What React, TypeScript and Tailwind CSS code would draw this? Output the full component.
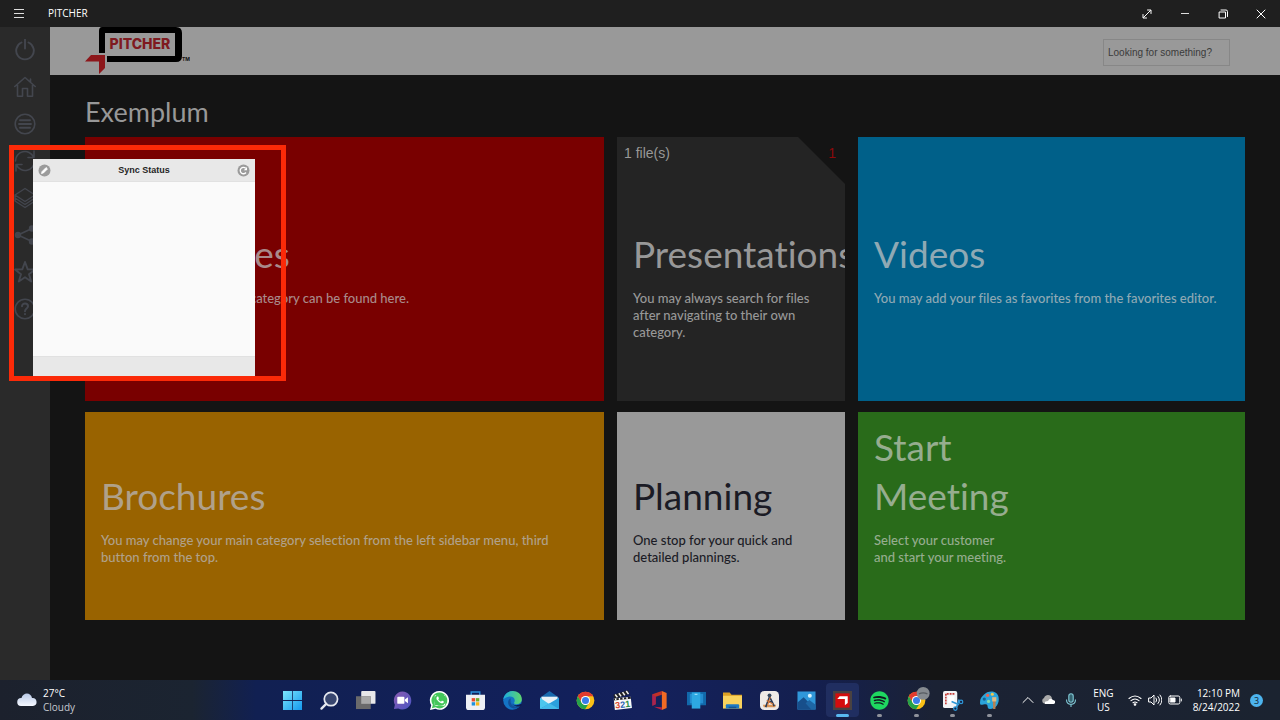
import type { ReactNode } from "react";
import { FaSpotify, FaWhatsapp } from "react-icons/fa";

const line = {
  fill: "none",
  stroke: "currentColor",
  strokeWidth: 1.6,
  strokeLinecap: "round" as const,
  strokeLinejoin: "round" as const,
};

const sidebarItems: { label: string; icon: ReactNode }[] = [
  { label: "Power", icon: <path d="M7.500 3.500a8.800 8.800 0 1 0 7 0M11 .5v9" strokeWidth="1.900" /> },
  {
    label: "Home",
    icon: <path d="M.8 10.500 11 1.500l10.200 9M3.500 9v11.200h5v-7.700h5v7.700h5V9M16.500 3v3" />,
  },
  {
    label: "Categories",
    icon: (
      <>
        <circle cx="11" cy="11" r="9.800" />
        <path d="M6 7.300h10M5 11h12M6 14.700h10" strokeWidth="1.900" />
      </>
    ),
  },
  {
    label: "Sync",
    icon: <path d="M1.500 11A9.500 9.500 0 0 1 19.500 6.800M20 1v6.500h-6M20.500 11A9.500 9.500 0 0 1 2.500 15.200M2 21v-6.500h6" />,
  },
  {
    label: "Layers",
    icon: <path d="m1 8 10-6.500L21 8l-10 6.500zM1 8v3l10 6.500L21 11V8M1 11v3l10 6.500L21 14v-3" strokeWidth="1.400" />,
  },
  {
    label: "Share",
    icon: (
      <>
        <path d="M18 4.500 4 11l14 6.500" />
        <circle cx="4" cy="11" r="2.400" fill="currentColor" />
        <circle cx="18" cy="4.500" r="2.400" fill="currentColor" />
        <circle cx="18" cy="17.500" r="2.400" fill="currentColor" />
      </>
    ),
  },
  { label: "Favorites", icon: <path d="m11 1 2.700 7.300 7.300.2-6 4.700 2.200 7.300L11 16.200l-6.200 4.300L7 13.200 1 8.500l7.300-.2z" strokeWidth="1.900" /> },
  {
    label: "Help",
    icon: (
      <>
        <circle cx="11" cy="11" r="9.800" />
        <path d="M8 8.300C8 4.500 14 4.700 14 8.200c0 2.300-3 2.500-3 5M11 16v.3" strokeWidth="2" />
      </>
    ),
  },
];

function PitcherLogo() {
  return (
    <svg viewBox="0 0 105 48" className="h-12 w-[105px]" role="img" aria-label="Pitcher">
      <path d="M17 0h74q6 0 6 6v23q0 6-6 6H22v-6h68V6H20v20h-6V4q0-4 3-4z" fill="#000" />
      <path d="m0 34.500 6-6.500h14v13l-6 6V34.500z" fill="#8d171b" />
      <text x="24.500" y="21.500" fill="#7f1a20" fontFamily="Inter, sans-serif" fontSize="14" fontWeight="800">
        PITCHER
      </text>
      <text x="97" y="34" fill="#111" fontFamily="Inter, sans-serif" fontSize="5" fontWeight="700">
        TM
      </text>
    </svg>
  );
}

function Chrome() {
  return (
    <>
      <circle cx="10" cy="10" r="9.300" fill="#fbc116" />
      <path d="M1.900 5.400A9.300 9.300 0 0 1 18.100 5.400H10A4.600 4.600 0 0 0 6 12.300z" fill="#e33b2e" />
      <path d="M1.900 5.400A9.300 9.300 0 0 0 9.600 19.300l4.300-7A4.600 4.600 0 0 1 6 12.300z" fill="#25a24b" />
      <circle cx="10" cy="10" r="4.800" fill="#fff" />
      <circle cx="10" cy="10" r="3.700" fill="#3b7de9" />
    </>
  );
}

const apps: { label: string; icon: ReactNode; state?: "open" | "active" }[] = [
  {
    label: "Start",
    icon: (
      <>
        <linearGradient id="win" x1="0" y1="0" x2="1" y2="1">
          <stop stopColor="#7ce6fc" />
          <stop offset="1" stopColor="#1498ee" />
        </linearGradient>
        <path d="M0 0h9.600v9.600H0zM10.400 0H20v9.600h-9.600zM0 10.400h9.600V20H0zM10.400 10.400H20V20h-9.600z" fill="url(#win)" />
      </>
    ),
  },
  {
    label: "Search",
    icon: (
      <>
        <circle cx="11.500" cy="8.500" r="7" fill="#38466f" stroke="#e6e9f0" strokeWidth="1.800" />
        <path d="m6.500 13.500-5 5" stroke="#e6e9f0" strokeWidth="2.400" strokeLinecap="round" />
      </>
    ),
  },
  {
    label: "Task view",
    icon: (
      <>
        <rect x="5.500" y="0" width="15" height="13.500" rx="1" fill="#e8e8ea" />
        <path d="M0 5.500h15.500v13.500H0z" fill="#6a6a6b" />
        <path d="M5.500 5.500h10v8h-10z" fill="#a9a9a9" />
      </>
    ),
  },
  {
    label: "Chat",
    icon: (
      <>
        <linearGradient id="chat" x1="0" y1="0" x2="1" y2="1">
          <stop stopColor="#8a5bb0" />
          <stop offset="1" stopColor="#4b55c4" />
        </linearGradient>
        <path d="M10 .5a9.500 9.500 0 1 1-4.500 18L1 19l1-4.500A9.500 9.500 0 0 1 10 .5z" fill="url(#chat)" />
        <rect x="4.500" y="6" width="7.500" height="7.500" rx="1" fill="#fff" />
        <path d="m12.500 9 3.200-2.500v6.500l-3.200-2.500z" fill="#fff" />
      </>
    ),
  },
  {
    label: "WhatsApp",
    icon: (
      <>
        <path d="M10.300 0a9.900 9.900 0 1 1-4.500 18.800L0 20l1.300-5A9.900 9.900 0 0 1 10.300 0z" fill="#fff" />
        <path d="M10.300 1.500a8.400 8.400 0 1 1-4.500 15.700L2 18.200 3 14.500A8.400 8.400 0 0 1 10.300 1.500z" fill="#43c65a" />
        <svg x="5" y="4.500" width="11" height="11" viewBox="85 100 270 280" overflow="hidden">
          <FaWhatsapp width="448" height="512" size={448} color="#fff" />
        </svg>
      </>
    ),
  },
  {
    label: "Microsoft Store",
    icon: (
      <>
        <path d="M5.500 5V1h9v4" fill="none" stroke="#2b91da" strokeWidth="1.500" />
        <path d="M0 4h20v13q0 3-3 3H3q-3 0-3-3z" fill="#eef0f4" />
        <path d="M6 7.500h3.600V11H6z" fill="#e94c2f" />
        <path d="M10.400 7.500H14V11h-3.600z" fill="#70ad2d" />
        <path d="M6 11.800h3.600v3.500H6z" fill="#1c91dd" />
        <path d="M10.400 11.800H14v3.500h-3.600z" fill="#f5b71a" />
      </>
    ),
  },
  {
    label: "Edge",
    icon: (
      <>
        <linearGradient id="edge" x1="0" y1="0" x2="1" y2="0">
          <stop stopColor="#1cacdf" />
          <stop offset="1" stopColor="#5fd66b" />
        </linearGradient>
        <circle cx="10" cy="10" r="9.800" fill="#1474c6" />
        <path d="M.3 9C2-3.500 19.500-2 19.800 8.500c.2 6-7.300 6.500-8.300 4 3.500-5-4-10-11.200-3.500z" fill="url(#edge)" />
        <path d="M8 7.500c-5 3-2.500 11.500 5.500 11 2.200-.4 4-1.600 5.200-3.400C14 18 8 15.500 8 11z" fill="#12509a" />
        <path d="M8.500 10c0 3 2 5 5.200 5 2.200 0 3.800-.6 5.200-1.500l.8 1.500-1 .8C14 17.500 8.500 15 8.500 10z" fill="#0e1c50" />
      </>
    ),
  },
  {
    label: "Mail",
    icon: (
      <>
        <path d="M0 7 10 0l10 7v12H0z" fill="#1769ad" />
        <path d="M1.500 6h17v8h-17z" fill="#e9f1f6" />
        <path d="M0 7l10 7L0 19z" fill="#4cc7ee" />
        <path d="M20 7v12H0z" fill="#2b9fdd" />
        <path d="m0 19 10-6 10 6z" fill="#43b9ea" />
      </>
    ),
  },
  { label: "Chrome", icon: <Chrome /> },
  {
    label: "Media Player Classic",
    icon: (
      <g transform="rotate(-6 10 10)">
        <path d="M1 7h18v12H1z" fill="#fafafa" />
        <path d="m1 3 16-3 .7 4L2 7z" fill="#222" />
        <path d="m3 3 2 3M7 2l2 3.500M11 1.200l2 3.500M15 .5l2 3.500" stroke="#f1f1f1" strokeWidth="1.600" />
        <path d="M1 7h18v2H1z" fill="#222" />
        <path d="M3 7v2M7 7v2M11 7v2M15 7v2" stroke="#fff" strokeWidth="1.500" />
        <text x="1.800" y="17.500" fontFamily="Liberation Sans, sans-serif" fontSize="9.500" fontWeight="700">
          <tspan fill="#d8472c">3</tspan>
          <tspan fill="#2d66b4">2</tspan>
          <tspan fill="#2a8d45">1</tspan>
        </text>
      </g>
    ),
  },
  {
    label: "Office",
    icon: (
      <>
        <path d="M12.500 0 2.500 3.500v12L6 14V6l6.500-2z" fill="#c13127" />
        <path d="M2.500 3.500v12L6 14V6z" fill="#a82352" />
        <path d="M12.500 0 17.500 2v16l-5 2z" fill="#f26a24" />
        <path d="m4 16.500 8.500.7v2.800z" fill="#b62143" />
      </>
    ),
  },
  {
    label: "Remote Desktop",
    icon: (
      <>
        <path d="M0 1h20v14H0z" fill="#1168aa" />
        <path d="M3 3h14v10H3z" fill="#238bd0" />
        <path d="M5 1.500h9v17H5z" fill="#2da8e2" />
        <path d="M8 3.500h3" stroke="#b4eaff" />
      </>
    ),
  },
  {
    label: "File Explorer",
    icon: (
      <>
        <path d="M0 1.500h7l2 2.500h11v14H0z" fill="#dca023" />
        <path d="M0 5h20v13.500H0z" fill="#f9d35d" />
        <path d="M3 18.500V15q0-1 1-1h12q1 0 1 1v3.500z" fill="#1d7ac3" />
        <path d="M6 16.500h8V18H6z" fill="#14548f" />
      </>
    ),
  },
  {
    label: "Drafting tools",
    icon: (
      <>
        <rect width="20" height="20" rx="4.500" fill="#eeeae7" />
        <path d="M3 14.500h14l-1 2.500H4z" fill="#db9556" />
        <path d="M10 6 6 17M10 6l5 10M8 11.500h5" stroke="#293b56" strokeWidth="1.700" fill="none" />
        <path d="M11 6 8 15M7 10l7 4" stroke="#db7938" strokeWidth="1.100" />
        <circle cx="10" cy="4.500" r="2" fill="#34465d" />
      </>
    ),
  },
  {
    label: "Photos",
    icon: (
      <>
        <path d="M.5.500h19v19H.5z" fill="#3097da" />
        <path d="M.5 12 7 6.500l12.500 13H.5z" fill="#174f8b" />
        <path d="m9 13 4-3.500 6.500 5v5H15z" fill="#1e66a5" />
        <circle cx="13.500" cy="5" r="2.100" fill="#d9f4ff" />
      </>
    ),
  },
  {
    label: "Pitcher",
    state: "active",
    icon: (
      <>
        <path d="M0 0h20v20H0z" fill="#494242" />
        <path d="M2.500 2.500h15v15h-15z" fill="#d50c0d" />
        <path d="m4.500 8.500 2.500-3h8.500v7L12.500 15V8.500z" fill="#fff" />
      </>
    ),
  },
  {
    label: "Spotify",
    state: "open",
    icon: (
      <>
        <circle cx="10" cy="10" r="9" fill="#101820" />
        <FaSpotify size={20} color="#1ed760" />
      </>
    ),
  },
  {
    label: "Chrome profile",
    state: "open",
    icon: (
      <>
        <Chrome />
        <circle cx="17" cy="2.500" r="6.800" fill="#858a90" />
        <path d="M12.500 3q4.500-2 9 0" stroke="#575c62" fill="none" strokeWidth="1.500" />
      </>
    ),
  },
  {
    label: "Snipping Tool",
    state: "open",
    icon: (
      <>
        <rect width="15" height="18" rx="2" fill="#f2f3f5" />
        <path d="M3 14V3h10" fill="none" stroke="#c53b36" strokeWidth="1.700" strokeDasharray="2 1" />
        <path d="M5.500 5.500H12v7H5.500z" fill="#fff" />
        <path d="m9 11 8 3.500M14 18l3-9" stroke="#2e96d6" strokeWidth="1.700" />
        <circle cx="19" cy="11.500" r="1.800" fill="#172142" stroke="#2e96d6" strokeWidth="1.300" />
        <circle cx="13" cy="18.500" r="1.800" fill="#172142" stroke="#2e96d6" strokeWidth="1.300" />
      </>
    ),
  },
  {
    label: "Paint",
    state: "open",
    icon: (
      <>
        <path d="M4 4C8-1 18-1 19.500 6s-3 13-9 13c-4 0-1-5-4.500-5S0 16 0 12s2-6 4-8z" fill="#2ba4da" />
        <circle cx="4.500" cy="8.500" r="1.700" fill="#186093" />
        <circle cx="8" cy="4.500" r="1.700" fill="#ef6350" />
        <circle cx="13" cy="3.500" r="1.600" fill="#f6c749" />
        <circle cx="9" cy="11" r="1.700" fill="#83dcae" />
        <path d="M13.500 10h3l-.3 9h-2.400z" fill="#b68052" />
        <path d="M12.800 6.500h4.400v4.500h-4.400z" fill="#dfba82" />
      </>
    ),
  },
];

const tiles = [
  { title: "Interactives", body: "All the interactives of this category can be found here.", box: "bg-[#790000] text-[#a98a8a]" },
  { title: "Presentations", body: "You may always search for files after navigating to their own category.", box: "bg-[#242424] text-[#989898]", count: 1 },
  { title: "Videos", body: "You may add your files as favorites from the favorites editor.", box: "bg-[#006089] text-[#8fa9b4]" },
  { title: "Brochures", body: "You may change your main category selection from the left sidebar menu, third button from the top.", box: "bg-[#996300] text-[#b0a18a]" },
  { title: "Planning", body: "One stop for your quick and detailed plannings.", box: "bg-[#999999] text-[#1b1b25]" },
  { title: "Start\nMeeting", body: "Select your customer\nand start your meeting.", box: "bg-[#296b1a] text-[#96ad8f]" },
];

function Tile({ tile, tall }: { tile: (typeof tiles)[number]; tall: boolean }) {
  return (
    <a href="#" className={`relative block overflow-hidden ${tile.box}`}>
      {tile.count && (
        <div className="absolute inset-x-0 top-0 flex justify-between font-['Liberation_Sans',Arial,sans-serif] text-[14px] leading-4">
          <span className="pt-2 pl-[7px]">{tile.count} file(s)</span>
          <span className="h-[47px] w-[47px] bg-[#141414] pt-2 pr-[9px] text-right text-[#8d090b] [clip-path:polygon(0_0,100%_0,100%_100%)]">
            {tile.count}
          </span>
        </div>
      )}
      <div className={`flex items-end pl-4 ${tall ? "h-[141px]" : "h-[108px]"}`}>
        <h2 className="whitespace-pre text-[37px] leading-[49px]">{tile.title}</h2>
      </div>
      <p className="mt-3 whitespace-pre-line px-4 text-[13px] leading-[17px] font-medium">{tile.body}</p>
    </a>
  );
}

function TitleBar() {
  const button = "flex h-full w-[38px] items-center justify-center";
  return (
    <header className="flex h-[27px] shrink-0 items-center bg-[#1f1f1f] font-['Open_Sans',sans-serif] text-[10px] text-white">
      <button aria-label="Menu" className={button}>
        <svg viewBox="0 0 10 10" className="size-[10px]"><path d="M0 .5h10M0 4.500h10M0 8.500h10" stroke="#ddd" /></svg>
      </button>
      <span className="pl-[10px]">PITCHER</span>
      <div className="ml-auto flex h-full">
        <button aria-label="Full screen" className={button}>
          <svg viewBox="0 0 10 10" className="size-[10px]" {...line} strokeWidth={1}><path d="m1.500 8.500 7-7M5.500 1H9v3.500M1 5.500V9h3.500" /></svg>
        </button>
        <button aria-label="Minimize" className={button}>
          <svg viewBox="0 0 10 10" className="size-[10px]"><path d="M1 4.500h8" stroke="#ddd" /></svg>
        </button>
        <button aria-label="Restore" className={button}>
          <svg viewBox="0 0 10 10" className="size-[10px]" {...line} strokeWidth={1}><path d="M1.500 3h6v6h-6zM3 1h5q1.500 0 1.500 1.500V7.500" /></svg>
        </button>
        <button aria-label="Close" className={button}>
          <svg viewBox="0 0 10 10" className="size-[10px]" {...line} strokeWidth={1}><path d="m1 1 8 8M9 1 1 9" /></svg>
        </button>
      </div>
    </header>
  );
}

function SyncStatus() {
  return (
    <div className="absolute top-[145px] left-[9px] flex h-[236px] w-[277px] border-[5px] border-[#fb2a08] pt-[9px] pl-[19px]">
      <section aria-label="Sync Status" className="flex w-[222px] flex-col bg-[#fafafa]">
        <div className="flex h-[23px] items-center justify-between border-b border-[#e1e1e1] bg-[#e8e8e8] px-[5px]">
          <button aria-label="Edit">
            <svg viewBox="0 0 13 13" className="size-[13px]">
              <circle cx="6.500" cy="6.500" r="6" fill="#9b9b9b" />
              <path d="m3.500 9.500.6-2 4-4 1.400 1.400-4 4z" fill="#fff" stroke="#fff" strokeWidth=".8" />
            </svg>
          </button>
          <h2 className="font-['Liberation_Sans',Arial,sans-serif] text-[9px] leading-3 font-bold text-[#252525]">Sync Status</h2>
          <button aria-label="Refresh">
            <svg viewBox="0 0 13 13" className="size-[13px]">
              <circle cx="6.500" cy="6.500" r="6" fill="#9b9b9b" />
              <path d="M9 8.500A3.200 3.200 0 1 1 8.700 4.300" fill="none" stroke="#fff" strokeWidth="1.300" />
              <path d="M10 3v3.300H6.800z" fill="#fff" />
            </svg>
          </button>
        </div>
        <div className="flex-1" />
        <div className="h-5 border-t border-[#e1e1e1] bg-[#e8e8e8]" />
      </section>
    </div>
  );
}

function Taskbar() {
  return (
    <footer className="grid h-10 shrink-0 grid-cols-[274px_1fr_272px] items-center bg-[linear-gradient(90deg,#1c212d_0%,#1b2431_15%,#112052_20%,#12205b_45%,#14215c_50%,#141f4e_64%,#1b2234_73%,#1b2330_100%)] font-['Open_Sans',sans-serif] text-[10px] leading-[14px] text-white">
      <div className="flex items-center gap-[6px] pl-[17px]">
        <svg viewBox="0 0 20 14" className="h-[14px] w-5">
          <linearGradient id="cloud" x1="0" y1="0" x2="0" y2="1">
            <stop stopColor="#b9c9e6" />
            <stop offset="1" stopColor="#f5f8ff" />
          </linearGradient>
          <path d="M4 13a4 4 0 0 1 .5-8C6-1 14-1 15 5a4 4 0 0 1 1 8z" fill="url(#cloud)" />
        </svg>
        <div>
          <div>27°C</div>
          <div className="text-[#c5c8ce]">Cloudy</div>
        </div>
      </div>
      <nav aria-label="Applications" className="grid grid-cols-20">
        {apps.map((app) => (
          <button
            key={app.label}
            aria-label={app.label}
            className={`relative mx-auto flex h-[34px] w-[33px] items-center justify-center rounded ${app.state === "active" ? "bg-[#202e60]" : ""}`}
          >
            <svg viewBox="0 0 20 20" className="size-[19px] overflow-visible">{app.icon}</svg>
            {app.state && (
              <span className={`absolute bottom-0 h-[3px] rounded-full ${app.state === "active" ? "w-[13px] bg-[#59b9f0]" : "w-[5px] bg-[#8f929b]"}`} />
            )}
          </button>
        ))}
      </nav>
      <div className="flex items-center justify-end pr-[17px]">
        <svg viewBox="0 0 12 12" className="mr-[7px] size-3" {...line} strokeWidth={1}><path d="m1 8.500 5-5 5 5" /></svg>
        <svg viewBox="0 0 14 12" className="mr-[10px] h-3 w-[14px]">
          <path d="M3 9.500A3 3 0 0 1 3 4c2-5 8-3 8 1l-6 4.500z" fill="#aaa" />
          <path d="M4 10q-1-3 3-3 2-4 5-1c4 1 2 4 0 4z" fill="#fff" />
        </svg>
        <svg viewBox="0 0 12 14" className="mr-4 h-[14px] w-3" fill="none" stroke="#81c9d6" strokeWidth="1.100">
          <rect x="3.800" y=".8" width="4.400" height="8.400" rx="2.200" fill="#356471" />
          <path d="M1.500 6.500c0 6.500 9 6.500 9 0M6 11.500V14" />
        </svg>
        <div className="mr-[14px] text-center">
          <div>ENG</div>
          <div>US</div>
        </div>
        <svg viewBox="0 0 14 12" className="mr-[6px] h-3 w-[14px]" {...line} strokeWidth={1.1}>
          <path d="M1 4.500q6-5 12 0M3 6.700q4-3.300 8 0M5 8.700q2-1.500 4 0" />
          <circle cx="7" cy="10.500" r=".8" fill="currentColor" />
        </svg>
        <svg viewBox="0 0 14 12" className="mr-[6px] h-3 w-[14px]" {...line} strokeWidth={1}>
          <path d="M1 4h2l3-3v10L3 8H1zM8 4q1.500 2 0 4M10 2.500q3 3.500 0 7M12 1q4 5 0 10" />
        </svg>
        <svg viewBox="0 0 14 12" className="mr-[11px] h-3 w-[14px]" {...line} strokeWidth={1}>
          <rect x=".8" y="2" width="11" height="8" rx="1.500" />
          <path d="M2.500 4H7v4H2.500z" fill="currentColor" />
          <path d="M13.300 5v2" />
        </svg>
        <div className="mr-[10px] text-right">
          <div>12:10 PM</div>
          <div>8/24/2022</div>
        </div>
        <span className="flex size-[13px] items-center justify-center rounded-full bg-[#4db4ee] text-[9px] leading-none text-[#15222f]">3</span>
      </div>
    </footer>
  );
}

export default function App() {
  return (
    <div className="relative flex min-h-screen flex-col bg-[#141414] font-['Lato',sans-serif] [font-variant-ligatures:none]">
      <TitleBar />
      <div className="flex flex-1">
        <nav aria-label="Main" className="flex w-[50px] shrink-0 flex-col bg-[#2a2a2a] pt-1 text-[#43464e]">
          {sidebarItems.map((item) => (
            <button key={item.label} aria-label={item.label} className="flex h-[37px] items-center justify-center">
              <svg viewBox="0 0 22 22" className="size-[22px]" {...line}>{item.icon}</svg>
            </button>
          ))}
        </nav>
        <div className="flex min-w-0 flex-1 flex-col">
          <div className="flex h-12 items-center justify-between bg-[#999999] pr-[50px] pl-[35px]">
            <PitcherLogo />
            <input
              type="search"
              aria-label="Search"
              placeholder="Looking for something?"
              className="mt-[2px] h-[27px] w-[127px] border border-[#878787] px-1 font-['Liberation_Sans',Arial,sans-serif] text-[10px] placeholder:text-[#3b3b3b]"
            />
          </div>
          <main className="px-[35px] pb-[60px]">
            <h1 className="pt-[21px] text-[27px] leading-8 text-[#989898]">Exemplum</h1>
            <div className="mt-[9px] grid grid-cols-[519fr_228fr_387fr] grid-rows-[264px_208px] gap-x-[13px] gap-y-[11px]">
              {tiles.map((tile, index) => (
                <Tile key={tile.title} tile={tile} tall={index < 3} />
              ))}
            </div>
          </main>
        </div>
      </div>
      <Taskbar />
      <SyncStatus />
    </div>
  );
}
